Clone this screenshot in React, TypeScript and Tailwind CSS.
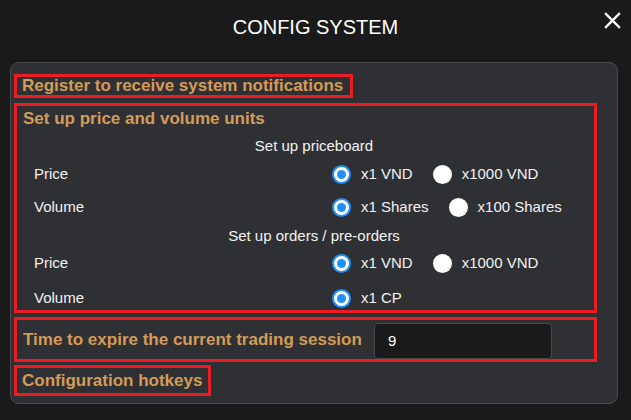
import React from "react";

function Radio({ checked }: { checked: boolean }) {
  return checked ? (
    <span className="flex h-[19px] w-[19px] shrink-0 items-center justify-center rounded-full border-2 border-[#1e90ff] bg-white">
      <span className="h-[9px] w-[9px] rounded-full bg-[#1e90ff]" />
    </span>
  ) : (
    <span className="h-[19px] w-[19px] shrink-0 rounded-full bg-white" />
  );
}

function Option({ checked, label }: { checked: boolean; label: string }) {
  return (
    <div className="flex items-center gap-[10px]">
      <Radio checked={checked} />
      <span className="leading-[20px]">{label}</span>
    </div>
  );
}

function Row({
  label,
  options,
  mt,
}: {
  label: string;
  options: { checked: boolean; label: string }[];
  mt: string;
}) {
  return (
    <div className={`flex h-[20px] items-center ${mt}`}>
      <div className="w-[315px] shrink-0 pl-[17px] leading-[20px]">{label}</div>
      <div className="flex items-center gap-[20px]">
        {options.map((o) => (
          <Option key={o.label} checked={o.checked} label={o.label} />
        ))}
      </div>
    </div>
  );
}

export default function App() {
  return (
    <div
      className="h-[420px] w-[631px] bg-[#1a1a1a] text-[15px] text-[#f2f2f2]"
      style={{ fontFamily: '"Liberation Sans", Arial, sans-serif' }}
    >
      <div className="relative flex h-[62px] items-start justify-center pt-[15px]">
        <div className="text-[20px] leading-[24px] text-white">CONFIG SYSTEM</div>
        <svg
          className="absolute left-[604px] top-[12px]"
          width="17"
          height="17"
          viewBox="0 0 17 17"
          fill="none"
          stroke="white"
          strokeWidth="2.4"
          strokeLinecap="square"
        >
          <path d="M2 2L15 15M15 2L2 15" />
        </svg>
      </div>
      <div className="ml-[10px] flex h-[342px] w-[608px] flex-col rounded-[9px] border border-[#4a4b4f] bg-[#2f3034] pb-[7px] pl-[3px] pr-[20px] pt-[11px]">
        {/* Box 1 */}
        <div className="flex h-[24px] w-fit items-center border-[3px] border-[#ec1c24] pl-[5px] pr-[7px]">
          <span className="text-[17px] font-bold leading-[18px] text-[#d39b58]">
            Register to receive system notifications
          </span>
        </div>
        {/* Box 2 */}
        <div className="mt-[5px] flex h-[210px] flex-col border-[3px] border-[#ec1c24] pb-[2px]">
          <div className="mt-[3px] h-[20px] pl-[6px] text-[17px] font-bold leading-[20px] text-[#d39b58]">
            Set up price and volume units
          </div>
          <div className="mt-[7px] h-[20px] pl-[17px] text-center leading-[20px]">Set up priceboard</div>
          <Row
            mt="mt-[8px]"
            label="Price"
            options={[
              { checked: true, label: "x1 VND" },
              { checked: false, label: "x1000 VND" },
            ]}
          />
          <Row
            mt="mt-[13px]"
            label="Volume"
            options={[
              { checked: true, label: "x1 Shares" },
              { checked: false, label: "x100 Shares" },
            ]}
          />
          <div className="mt-[9px] h-[20px] pl-[17px] text-center leading-[20px]">Set up orders / pre-orders</div>
          <Row
            mt="mt-[7px]"
            label="Price"
            options={[
              { checked: true, label: "x1 VND" },
              { checked: false, label: "x1000 VND" },
            ]}
          />
          <Row mt="mt-[15px]" label="Volume" options={[{ checked: true, label: "x1 CP" }]} />
        </div>
        {/* Box 3 */}
        <div className="mt-[4px] flex h-[46px] items-start border-[3px] border-[#ec1c24]">
          <div className="mt-[10px] w-[357px] pl-[6px] text-[17px] font-bold leading-[20px] text-[#d39b58]">
            Time to expire the current trading session
          </div>
          <div className="mt-[3px] flex h-[36px] w-[178px] items-center rounded-[4px] border border-[#48494d] bg-[#1a1a1a] pl-[13px] text-[15px] text-white">
            9
          </div>
        </div>
        {/* Box 4 */}
        <div className="mt-[3px] flex h-[31px] w-fit items-center border-[3px] border-[#ec1c24] pl-[5px] pr-[6px]">
          <span className="text-[17px] font-bold leading-[20px] text-[#d39b58]">Configuration hotkeys</span>
        </div>
      </div>
    </div>
  );
}
